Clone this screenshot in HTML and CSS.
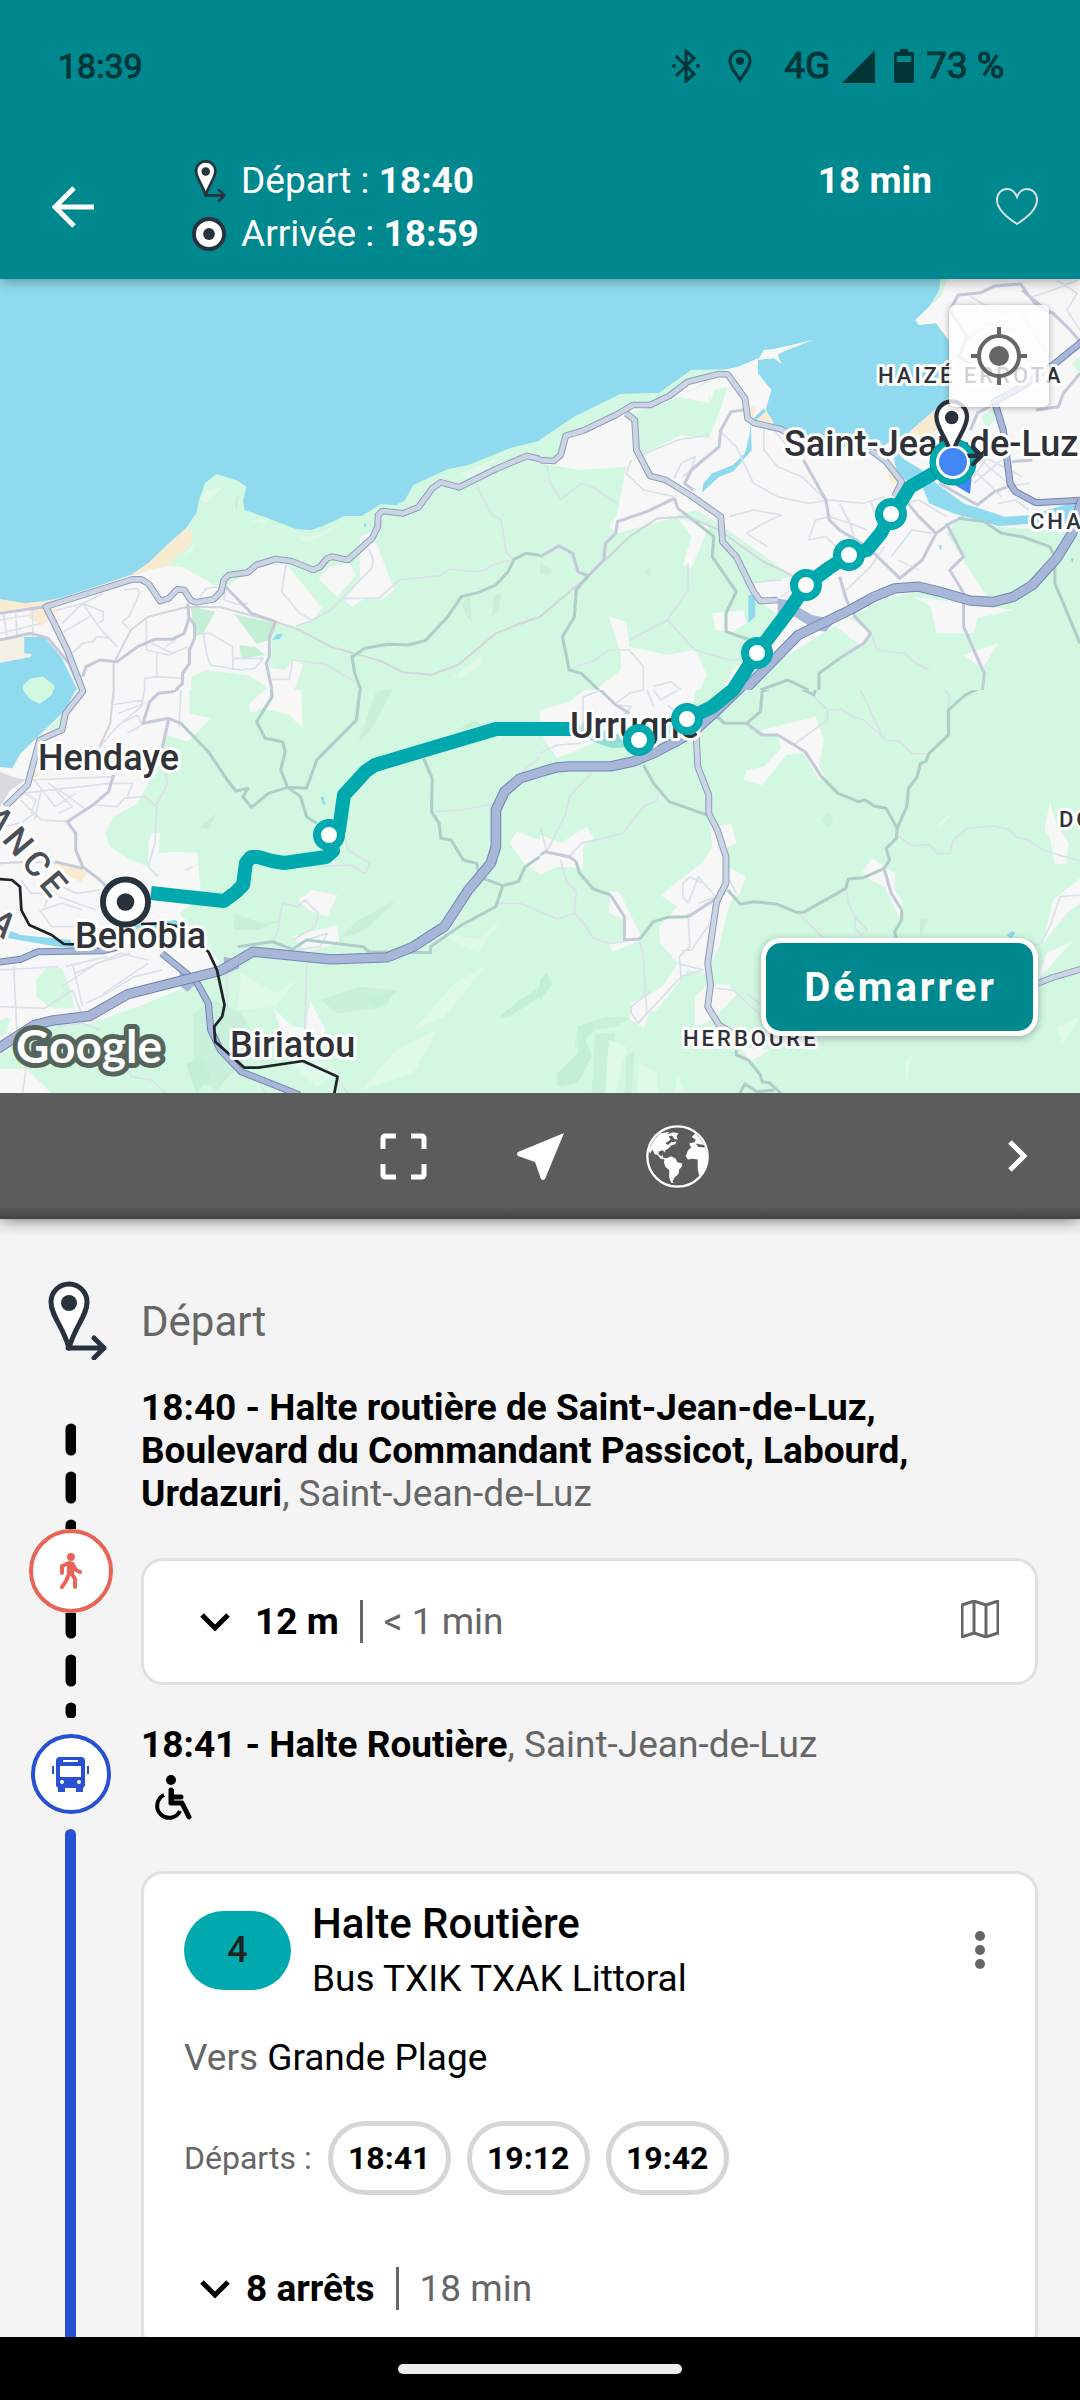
FILE: index.html
```html
<!DOCTYPE html>
<html lang="fr">
<head>
<meta charset="utf-8">
<meta name="viewport" content="width=device-width, initial-scale=1">
<title>Itinéraire</title>
<link rel="stylesheet" href="styles.css">
</head>
<body>
<svg class="defs" aria-hidden="true">
  <symbol id="pin" viewBox="0 0 60 80">
    <path d="M22 68C16 46 4 36 4 22a18 18 0 0 1 36 0C40 36 28 46 22 68Z" fill="#fff" stroke="#27323d" stroke-width="5" stroke-linejoin="round"/>
    <circle cx="22" cy="23" r="8" fill="#27323d"/>
    <path d="M21 68H57M47 58l10 10-10 10" fill="none" stroke="#27323d" stroke-width="5" stroke-linecap="round" stroke-linejoin="round"/>
  </symbol>
  <symbol id="target" viewBox="0 0 52 52">
    <circle cx="26" cy="26" r="23" fill="#fff" stroke="#27323d" stroke-width="6"/>
    <circle cx="26" cy="26" r="9" fill="#27323d"/>
  </symbol>
  <symbol id="chevron" viewBox="0 0 30 20">
    <path d="M2 3l13 13L28 3" fill="none" stroke="#000" stroke-width="5"/>
  </symbol>
</svg>

<div class="app">
  <header class="top">
    <div class="status">
      <span>18:39</span>
      <div class="status-icons">
        <svg width="28" height="34" viewBox="0 0 28 34"><path d="M4 7l18 18-8 7V2l8 7L4 27" fill="none" stroke="#003538" stroke-width="3"/><circle cx="2" cy="17" r="2" fill="#003538"/><circle cx="26" cy="17" r="2" fill="#003538"/></svg>
        <svg class="status-pin" width="24" height="34" viewBox="0 0 24 34"><path d="M12 31C8 24 2 19 2 12a10 10 0 0 1 20 0c0 7-6 12-10 19Z" fill="none" stroke="#003538" stroke-width="3"/><circle cx="12" cy="12" r="4" fill="#003538"/></svg>
        <span>4G</span>
        <svg class="status-signal" width="33" height="33" viewBox="0 0 33 33"><path d="M0 33L33 0V33Z" fill="#003538"/></svg>
        <svg class="status-battery" width="20" height="34" viewBox="0 0 20 34"><path fill-rule="evenodd" d="M6 0h8v3h4a2 2 0 0 1 2 2v27a2 2 0 0 1-2 2H2a2 2 0 0 1-2-2V5a2 2 0 0 1 2-2h4ZM3 7v6h14V7Z" fill="#003538"/></svg>
        <span>73 %</span>
      </div>
    </div>
    <div class="trip">
      <button class="icon-btn back" aria-label="Retour"><svg width="42" height="42" viewBox="0 0 42 42"><path d="M42 21H4M22 2L3 21l19 19" fill="none" stroke="#fff" stroke-width="5"/></svg></button>
      <div class="trip-times">
        <div class="trip-line"><svg class="trip-pin" width="32" height="43"><use href="#pin"/></svg><span>Départ : <b>18:40</b></span></div>
        <div class="trip-line"><svg class="trip-target" width="34" height="34"><use href="#target"/></svg><span>Arrivée : <b>18:59</b></span></div>
      </div>
      <b class="trip-duration">18 min</b>
      <button class="icon-btn" aria-label="Ajouter aux favoris"><svg width="42" height="38" viewBox="0 0 42 38"><path d="M21 36C10 29 1 21 1 12 1 5 6 1 11 1c5 0 8 3 10 8 2-5 5-8 10-8 5 0 10 4 10 11 0 9-9 17-20 24Z" fill="none" stroke="#d9dfe0" stroke-width="2"/></svg></button>
    </div>
  </header>

  <section class="map" aria-label="Carte de l'itinéraire">
    <svg class="map-canvas" viewBox="0 0 1080 814" preserveAspectRatio="xMidYMid slice">
      <!-- north-west tile -->
      <svg x="0" y="0" width="540" height="411" viewBox="0 27 1568 1233" preserveAspectRatio="none">
        <rect y="27" width="1568" height="1233" class="green"/>
        <path class="water" d="M0 27H1568V512L1480 535 1360 585 1300 598 1200 645 1175 692 1150 705 1105 703 1050 738 1000 738 945 765 905 780 860 777 770 742 710 720 706 690 716 650 690 632 628 612 595 640 578 690 570 730 540 775 490 820 430 880 380 915 300 950 200 980 130 993 70 1000 0 988Z"/>
        <path class="relief-light" d="M580 685l20-25 45-6-50 50zM730 750l50-5-10 20zM865 800l60-5 90-50-90 60-45 12zM1315 1220l90-65-5 25-60 45zM1340 610l100-45-20 30-60 30zM530 860l40-50-5 30z"/>
        <path class="relief" d="M1340 1000l25-20 5 80-20-30zM1435 975l22-10-10 60-18 15zM680 690l15-20-8 60z"/>
        <path class="land" d="M0 1020L130 1000 380 915 480 885 530 890 620 945 655 950 740 895 830 880 935 1015 905 1052 860 1068 800 1055 790 1100 775 1160 785 1195 830 1200 850 1170 880 1185 855 1260H0ZM925 925L960 890 1015 878 1033 915 980 982ZM1045 800L1080 785 1145 960 1110 990 1060 985 1020 1010 1000 990 1045 930Z"/>
        <path class="sand" d="M540 775L557 790 555 825 500 870 495 885 420 905 360 925 130 1005 170 1020 150 1045 120 1065 85 1045 85 1010 0 1025V988L70 1000 130 993 200 980 300 950 380 915 430 880Z"/>
        <path class="green" d="M555 1010L625 1025 590 1090 565 1100ZM555 1220L600 1200 720 1215 775 1250V1260H555Z"/>
        <path class="forest" d="M555 1010L625 1025 590 1090 565 1100ZM680 1032L800 1060 780 1110 745 1122ZM695 1125L740 1130 770 1155 700 1167Z"/>
        <path class="water" d="M70 1100L130 1102 180 1165 225 1260H0V1178L70 1165ZM790 1110l15-18 18 0-12 15zM1058 758h5v12h-5z"/>
        <path class="sand-light" d="M0 1105H70V1150L92 1152 88 1162 0 1175Z"/>
        <path class="green" d="M67 1260V1245L90 1225 125 1220 157 1245V1260Z"/>
        <path class="minor" d="M0 1050L90 1035M20 1100L10 1030M50 1095L45 1030M0 1090L120 1060M95 1100V1010M165 1020L240 1000 280 980M180 1060L240 1000 300 970M185 1085L260 1040M240 1000L290 1075 340 1130M240 1000L300 1025 300 1050 285 1060M360 960L400 955 405 970 375 1040 355 1055 375 1080M210 1150L240 1120 270 1115 280 1100 320 1105M425 1050V1140L490 1155 545 1130M455 1150V1220L530 1225M420 1260V1225L455 1220M590 1090L610 1090 675 1130 677 1200M590 1090L600 1150 610 1185 700 1200 740 1195 765 1165 680 1165M580 980L600 955 640 950M650 990L690 1003 720 1000M655 960L650 990M830 885L818 965 870 1030 905 1050M860 1068L905 1052 960 1020 1080 895 1083 865 1070 835M990 985H1100L1160 930 1280 917 1305 897 1380 905 1410 900 1430 885 1493 868M1380 640L1425 730 1455 750 1462 790 1470 850 1493 868M790 1228L840 1228 850 1170 945 1183 1030 1235M440 1120L500 1150M480 1130L510 1110"/>
        <path class="rail" d="M330 1260V1180L380 1080 430 1040 545 1010 640 1012 800 1055 870 1080 960 1130 1110 1175 1170 1207 1255 1214 1330 1185 1440 1090 1500 1065 1568 1040"/>
        <path class="second" d="M655 950L730 1030 800 1055 782 1105 782 1160 773 1180 790 1260M545 1000L548 1040 565 1065V1105L550 1140V1180L530 1210V1240L510 1260M240 1220L250 1190 290 1170 340 1175 400 1130 450 1108 500 1108 535 1090 550 1040M0 1030L130 1010M0 1110L90 1090 140 1105 200 1180 235 1260"/>
        <path class="second-green" d="M1048 1260L1030 1210 1022 1160 1060 1135 1125 1123 1185 1125 1235 1112 1300 1040 1340 980 1390 967 1440 945 1475 905 1493 868 1528 850 1568 856"/>
        <path class="major-case" d="M245 1275L195 1140 155 1055 133 1010 385 928 410 928 432 942 465 993 490 985 515 958 535 960 555 992 570 997 620 988 642 965 650 930 665 915 718 908 745 885 800 867 845 873 910 900 930 890 950 865 965 860 1010 870 1080 805 1097 770 1098 735 1110 723 1170 730 1215 712 1255 655 1280 637 1333 652 1440 597 1530 558 1580 570"/>
        <path class="major" d="M245 1275L195 1140 155 1055 133 1010 385 928 410 928 432 942 465 993 490 985 515 958 535 960 555 992 570 997 620 988 642 965 650 930 665 915 718 908 745 885 800 867 845 873 910 900 930 890 950 865 965 860 1010 870 1080 805 1097 770 1098 735 1110 723 1170 730 1215 712 1255 655 1280 637 1333 652 1440 597 1530 558 1580 570"/>
      </svg>

      <!-- north-east tile -->
      <svg x="540" y="0" width="540" height="411" viewBox="0 27 1568 1233" preserveAspectRatio="none">
        <rect y="27" width="1568" height="1233" class="land"/>
        <path class="water" d="M0 27H1182L1165 75 1090 150 1100 165 1150 160 1190 215V380L1068 490 1000 525 960 540 800 520 711 485 675 460 655 420 672 360 633 310 633 265 575 290 530 300 440 300 345 370 235 372 100 440 0 510Z"/>
        <path class="green" d="M1182 27L1165 75 1130 110 1160 60 1162 27ZM0 510L100 440 235 372 345 370 440 300 540 298 520 315 430 340 375 385 320 410 270 410 220 440 75 500 50 575 0 575ZM400 380L490 330 495 400 505 360 545 350 520 430 490 505 410 495 295 555 270 480 265 425 340 410ZM0 580L120 600 250 590 222 745 380 740 455 720 560 790 735 920 600 945 640 1000 700 1040 660 1110 560 1200 530 1260H0ZM1215 745L1320 770 1480 780 1568 790V1260H600L680 1180 830 1085 1000 985 1100 965 1300 985 1180 790ZM1280 440L1320 415 1320 450 1300 475ZM1545 280L1568 260V310Z"/>
        <path class="relief" d="M0 880l35 20-10 20-25-10zM305 910l18-22-4 30z"/>
        <path class="land" d="M500 1030L590 1020 600 1060 560 1085 510 1080ZM415 885L440 800 400 745 450 760 490 770 440 893ZM200 1040L250 1055 260 1130 370 1155 450 1140 485 1215 465 1260H160L235 1200V1150ZM1085 980L1375 1020 1270 1045 1260 1090 1150 1090 1135 1010ZM860 1070L900 1045 965 1090 935 1130ZM1230 1155L1330 1120 1285 1195ZM400 380L495 335 490 400ZM200 770L222 740 380 660 400 740 225 790Z"/>
        <path class="land" d="M633 270L650 240 680 237 795 209 705 245 690 255 702 283 680 265Z"/>
        <path class="sand" d="M655 418L680 460 625 450ZM1190 380L1068 492 1130 500 1190 440ZM1010 600L1040 590 1035 640 1015 640ZM590 415L625 410 620 450 595 450Z"/>
        <path class="water" d="M1020 530L1060 570 1110 600 1150 640 1230 700 1350 740 1430 735 1568 690V760H1450L1330 768 1200 730 1130 700 1110 650 1040 620ZM612 462L615 540 560 605 520 620 470 668 475 640 500 610 560 585 595 550 607 500ZM605 975L625 975V1040L605 1058ZM620 445l30-30 5 10-30 28zM1157 825l10 2-4 14zM1540 865l10 0-4 14z"/>
        <path class="minor" d="M20 585L30 640 60 688 120 640 160 655 225 700M295 555L400 510 490 495M265 570L250 610 300 660 390 680M390 625L410 580 450 560 440 600 415 620M520 480L570 530 620 640 690 680 780 700 840 690M550 740L620 720 700 735 650 760 600 790 660 830M650 480V540L690 590 760 620 830 690M680 480L720 530 770 560M780 810L800 750 840 740M780 810L830 800 870 840M840 690L940 700 1000 680M840 740L900 760 950 780M870 700L900 760 920 830M960 690L980 760 1040 720M1020 860L1080 780 1140 790M1040 870L1100 900M1050 700L1100 690 1180 740M1240 600L1290 560 1400 620M1260 640L1340 570M1280 570L1370 650M1260 600L1340 680M1300 560L1260 620M1330 700L1380 690 1420 720M1250 80L1300 110 1360 130M1400 130L1440 200 1480 260M1430 80L1490 60 1568 27M1500 30L1560 70 1530 120 1568 180M1230 220L1300 160 1380 180M1240 300L1330 180M1220 260L1380 340M590 940L700 930M430 880V960L370 1050 260 1110M370 1050L450 1140 550 1170 620 1168M80 1200L160 1170 200 1140 260 1140 300 1190V1260M960 1090L980 1140 1060 1150 1090 1180 1130 1200M330 1250L380 1235 410 1260M890 960L960 890 1000 830M700 980L880 860M1420 640L1350 650"/>
        <path class="rail" d="M0 1040L140 918 260 800 340 745 430 740 520 780 640 870 740 920"/>
        <path class="second" d="M0 860L55 828 95 850 110 905 140 918 185 870 190 820 220 790 225 755 310 725 390 685M590 420L555 425 525 480 520 530 440 600 420 640 445 660M390 685L400 715 450 755M765 570L830 690 840 750 870 780 950 830 1045 925 1110 870 1150 790 1190 760 1230 740M870 920L890 990 915 1040 960 1090 940 1120 870 1165M1060 690L1100 740 1150 790M1180 760L1230 860 1190 900 1230 970 1230 1070 1290 1210 1285 1260M1190 120L1215 75 1280 68 1320 48 1395 42 1440 105 1490 130 1540 180 1568 215M1190 120L1240 200 1215 260 1300 310M1568 310L1520 370 1505 410 1440 420M1160 640L1270 705 1320 665 1360 650M1370 575L1430 570M1250 480L1270 430 1320 400M1480 130L1400 60"/>
        <path class="second-green" d="M450 755L505 800 500 860 570 965 540 1030 540 1085 610 1110M140 918L105 960 100 1040 65 1100 85 1200 120 1210 170 1260M1215 745L1290 755 1340 790 1400 800 1480 830 1495 860V940L1568 1120M870 1165L810 1210V1260M640 1260L720 1230 780 1260"/>
        <path class="major-case" d="M-10 570L40 573 60 555 75 497 125 482 220 435 270 405 320 405 375 378 430 335 520 312 545 313 595 385 603 445 620 458 700 478 720 490M250 430L275 450 280 540 320 618 365 630 440 678 525 740 530 815 570 860 620 965 640 993 690 990M960 540L1005 575 1050 635 1030 680"/>
        <path class="major" d="M-10 570L40 573 60 555 75 497 125 482 220 435 270 405 320 405 375 378 430 335 520 312 545 313 595 385 603 445 620 458 700 478 720 490M250 430L275 450 280 540 320 618 365 630 440 678 525 740 530 815 570 860 620 965 640 993 690 990M960 540L1005 575 1050 635 1030 680"/>
        <path class="junction" d="M690 985L715 990 790 1035 860 1050 830 1085 800 1080 740 1040 690 1030Z"/>
        <path class="trunk-case" d="M1580 210L1490 285 1400 350 1320 395 1345 480 1365 640 1380 665 1440 698 1580 690"/>
        <path class="trunk" d="M1580 210L1490 285 1400 350 1320 395 1345 480 1365 640 1380 665 1440 698 1580 690"/>
        <path class="highway-case" d="M570 1285L750 1095 900 1020 970 980 1030 955 1100 950 1160 965 1250 992 1315 996 1375 980 1430 945 1500 865 1545 790 1575 690"/>
        <path class="highway" d="M570 1285L750 1095 900 1020 970 980 1030 955 1100 950 1160 965 1250 992 1315 996 1375 980 1430 945 1500 865 1545 790 1575 690"/>
      </svg>

      <!-- south-west tile -->
      <svg x="0" y="411" width="540" height="403" viewBox="0 30 1568 1209" preserveAspectRatio="none">
        <rect y="30" width="1568" height="1209" class="land"/>
        <path class="green" d="M550 30V100L612 115 545 185 485 165 470 230 400 370 330 410 305 460 320 500 380 540 430 560 430 490 440 460 465 460 460 520 500 515 572 518 585 650 520 700 600 790 640 850 560 900 520 930 400 980 250 1035 150 1020 60 1070 0 1130V1165L80 1170 150 1240H1568V30ZM105 900L135 865 180 865 205 930 215 985 150 985 105 950ZM190 90L210 60 180 150 140 150ZM0 1020L30 1010 20 1060 0 1070Z"/>
        <path class="relief" d="M580 440l50-40-25 50zM1040 190l50-150 60-30-60 120zM980 780l60-60 110-60-90 90zM930 960l110-40 110 10-30 50-140 20zM560 1000l60-40 80 40 50 90-120 140-70-30zM680 700l80 30 60-10-70 30-70 0z"/>
        <path class="relief-light" d="M700 880l100 60 60-40-60 80-110 10zM1200 1050l120-140 90-50-120 150zM1250 750l140 30 60-60-60 100zM1050 1230l100-120 120-60-70 130zM840 1150l60-90 80 120-60 40z"/>
        <path class="forest" d="M1450 1010l60-50 58-40v30l-90 60zM1060 950l100-20-60 50zM540 1150l50-20 20 60-40 50zM1330 150l50-30 20 15z"/>
        <path class="land" d="M725 70L800 0 875 30 878 145 840 105 760 85 727 100ZM865 660L905 630 980 645 950 710 895 690ZM850 770L980 735 985 790 890 815ZM795 985L850 1040 890 1045 900 960 945 1050 930 1120 830 1100ZM1480 490L1500 455 1568 480V580L1530 560Z"/>
        <path class="water" d="M0 30L220 30 190 90 110 170 60 220 35 265 0 260ZM10 745L60 765 205 780 215 805 170 800 25 775ZM932 350l8 0 4 25-8-4zM390 735l120-15 80 70-20 0-60-50-120 10z"/>
        <path class="green" d="M66 30L85 55 115 72 150 45 155 30Z"/>
        <path class="urban" d="M0 275L35 290 75 300 30 330 0 380Z"/>
        <path class="sand" d="M165 550L215 560 255 575 235 605 200 590ZM85 270L120 280 100 295Z"/>
        <path class="minor" d="M330 30L330 60M325 75L415 60M345 100L420 70M350 130L400 105 410 130M370 160L420 130M85 300L330 290 320 310M60 340L320 310 385 310 370 350M100 300L160 380 220 340M60 360L120 420 200 425M160 330L210 380 170 400M140 310L200 350 250 390M90 400L105 360 70 340M0 440L60 430 100 400M120 330L100 420M275 375L340 380 360 355 420 350 455 380 450 490 430 560 460 590M470 230L487 310 455 375M0 550L80 545 165 550M115 690L150 740 230 740M120 690L180 670 240 690M60 600L90 640 170 640M160 610L220 640 290 630M170 650L280 690M150 620L130 680M250 970L310 940 390 890 470 870M180 920L280 850 380 820M220 880L350 820 430 840M300 940L430 850M40 860L50 1080 75 1170 65 1240M0 980L130 985 210 930 240 1010M210 850L240 980M0 870L170 860M190 860L310 830M420 30L410 80 340 140 290 200M525 30L520 140M540 570L560 560M920 560L1020 555 1060 580 1075 550 1010 510 1000 470M790 785L805 760 820 670 865 680 885 660 925 700 915 740 850 780M890 780L950 760 930 800 860 810M890 850L885 1050M1260 395L1340 390 1440 370M1470 360L1500 290 1568 230M1440 670L1510 670 1568 695M660 880L660 990 700 1060M360 1130L380 1190 440 1200 480 1240M740 1180L770 1240M880 1150L970 1180 1010 1240M170 1040L240 1030 290 1050"/>
        <path class="rail" d="M330 30L320 130 280 220M0 550L90 545"/>
        <path class="second" d="M530 20L500 35 460 40 435 65 415 130 490 115 525 130M490 115L470 210M330 285L315 335 270 375 195 425 220 460V510L240 560 290 600 320 630M160 545L240 565"/>
        <path class="second-green" d="M525 130L605 215 660 300 685 333 720 325 705 350 730 382 780 340 835 322M785 0L790 50 745 125 770 175 820 185 828 215 815 270 835 322 873 350 890 410 920 430M1035 0L1045 30 1035 120 920 240 890 325 835 322M1230 235L1255 295 1253 395 1275 430 1280 475 1310 480 1345 540 1385 550 1390 590 1460 617 1505 605 1525 560 1568 530M1460 617L1440 680 1340 735 1250 800V818L1070 815 1055 800 890 780 850 808 790 785 690 800"/>
        <path class="major-case" d="M232 0L240 35 190 100 180 150 115 180 80 315 15 380"/>
        <path class="major" d="M232 0L240 35 190 100 180 150 115 180 80 315 15 380"/>
        <path class="junction" d="M520 870L545 880 570 910 545 935 525 920ZM650 830L690 840 695 865 650 885Z"/>
        <path class="trunk-case" d="M-10 847L60 838 110 815 300 812 350 800M470 820L570 905 605 970 612 1050 640 1110 700 1175 870 1245"/>
        <path class="trunk" d="M-10 847L60 838 110 815 300 812 350 800M470 820L570 905 605 970 612 1050 640 1110 700 1175 870 1245"/>
        <path class="highway-case" d="M-20 1115L100 1035 150 1022 260 1008 370 943 640 872 735 815 960 838 1125 832 1200 800 1290 740 1360 630 1425 550 1440 500 1440 390 1465 335 1510 295 1590 270"/>
        <path class="highway" d="M-20 1115L100 1035 150 1022 260 1008 370 943 640 872 735 815 960 838 1125 832 1200 800 1290 740 1360 630 1425 550 1440 500 1440 390 1465 335 1510 295 1590 270"/>
        <path class="border" d="M-5 597L35 600 58 620 62 690 85 735 150 765 185 792 215 793M410 732L470 730 520 740 605 815 630 870 652 975 645 1010 622 1040 625 1085 710 1163 750 1163 880 1143 980 1190 970 1245"/>
      </svg>

      <!-- south-east tile -->
      <svg x="540" y="411" width="540" height="403" viewBox="0 30 1568 1209" preserveAspectRatio="none">
        <rect y="30" width="1568" height="1209" class="green"/>
        <path class="relief" d="M820 420l15-25 18 30-20 20zM1105 715l22 0-25 60zM0 900l20-20 15 30-35 50zM110 1040l80-30 80 0-50 30-60 10-60 60zM160 1060l60 0-30 180-40 0zM250 1130l25-20-10 130-20 0z"/>
        <path class="forest" d="M110 1040l60-20-40 50 20 60-40 80-60 10 0-40 60-60zM0 900l20-20 15 30-35 50z"/>
        <path class="relief-light" d="M1155 430l40-30-30 40zM200 1080l50 20-30 140-30 0zM290 1150l50 30 0 60-60 0zM400 1180l20 60-30 0zM1060 1150l20-30-15 90zM1500 1040l68-30-50 80z"/>
        <path class="land" d="M0 90L85 65 170 0H460L440 90 200 170 50 235 0 160ZM645 150L800 110 825 180 810 260 830 290 810 300 765 220 715 225 645 315 590 300 600 270 650 260 700 205 690 165 650 160ZM0 465L60 490 135 440 158 475 125 500V565L50 560 0 585ZM495 440L555 432 570 490 545 500 545 560 598 590 580 640 550 670 520 800 480 880 430 870 340 990 260 1020 265 980 355 920 400 850 350 790 345 740 400 680 350 645 470 550 500 500ZM205 633L230 635 290 760 295 780 210 815 200 790 240 780 240 715 200 700ZM935 575L965 535 1030 580 1030 630 1055 665 1045 715 1000 620 960 600ZM1480 370L1500 430 1535 490 1528 550 1495 553 1480 470 1465 450ZM1568 595L1490 660 1460 790 1530 700 1568 670ZM1545 785L1470 820 1445 900ZM450 950L490 910 550 915 570 945 500 1020 450 1040ZM580 1100L665 1110 610 1145ZM265 970L345 930 300 1045 265 1020Z"/>
        <path class="water" d="M1355 765l15-12 10 5-12 18z"/>
        <path class="minor" d="M0 220L50 195 120 190M125 130V50L180 30M220 70L260 40 300 30M300 0L330 80M330 30L350 60 400 30M230 75L265 80 240 110M370 75L410 110M150 280L85 350 75 400 20 515M345 340L340 360 300 380 240 460 120 490 80 535M60 540L75 600 105 635 100 700 50 717 0 695M100 700L135 740 155 775 200 790 245 785M290 785L300 830 310 1000 285 1030 265 1000 265 980 320 935M430 700L435 800 405 830 410 900M490 735L440 810 410 812M400 850L475 870M470 610L435 590 415 610 415 650 430 670 460 590 510 650 460 670M550 600L570 640M840 90L875 88 910 110 940 120 1005 180 1045 185 1080 220 1130 222M915 0L945 60 990 160M795 50L835 90V120L735 195M1150 0L1188 45 1186 90M1035 465L1080 497 1130 493 1155 522 1190 520 1200 480 1240 445 1320 438 1365 450 1385 472 1420 482 1460 510 1540 535 1568 542M890 630L895 670 915 710 950 750 935 765 915 745V710M750 700L825 775M510 925L560 930 645 1010M650 980L600 940M285 1030L410 890 475 870M1568 645L1510 650 1480 740 1455 790 1430 800M0 440L20 515"/>
        <path class="second" d="M125 0L165 20 220 75 260 100M600 130L645 165 690 165 770 215 815 287M0 525L15 515 85 530 105 545M205 645L245 710V780L290 777M1000 570L1020 640 1050 690M430 710L520 650"/>
        <path class="second-green" d="M300 255L330 310 375 365 485 405M505 100L535 130 600 130 640 95 645 35 720 5 795 45 810 0M815 287L865 340 925 365 945 360 970 378 1005 385 1037 445M1285 20L1235 45 1186 90V165L1130 220 1120 245 1105 250 1095 290 1070 325 1065 380 1037 445 1035 475 1005 505 1015 540 1000 565 940 593 895 597 888 625 765 697 745 697 690 673 620 665 582 673 545 630M105 545L115 580 155 627 205 645M290 777L330 725 370 712 430 710M1050 690V720L1030 755 1035 780M570 1110V1125L605 1140 640 1185 645 1205 665 1208 700 1240M580 1240L595 1212 630 1235 680 1230"/>
        <path class="major-case" d="M452 130L458 260 490 345V400L515 450 540 530V610L513 665 487 850 495 915 487 980 520 1035 560 1060M1440 912L1490 892 1580 865"/>
        <path class="major" d="M452 130L458 260 490 345V400L515 450 540 530V610L513 665 487 850 495 915 487 980 520 1035 560 1060M1440 912L1490 892 1580 865"/>
        <path class="highway-case" d="M-20 282L50 262 85 259H205L270 245 330 220 440 160 500 105 620 -15"/>
        <path class="highway" d="M-20 282L50 262 85 259H205L270 245 330 220 440 160 500 105 620 -15"/>
      </svg>

      <path class="route" d="M953 183L910 208 900 224 891 235 881 254 867 271 849 276 829 289 806 306 788 333 757 374 733 411 712 428 687 440"/>
      <path class="route route-faint" d="M687 440L639 461 612 462 580 450"/>
      <path class="route" d="M580 450H496L375 486 366 492 344 516 339 551 329 556 333 572 326 578 284 584 272 582 258 578H251L246 584 243 606 236 613 224 622 151 614"/>

      <g class="place">
        <text x="784" y="177">Saint-Jean-de-Luz</text>
        <text x="570" y="459">Urrugne</text>
        <text x="38" y="491">Hendaye</text>
        <text x="75" y="669">Behobia</text>
        <text x="230" y="778">Biriatou</text>
      </g>
      <g class="district">
        <text x="878" y="104">HAIZÉ ERROTA</text>
        <text x="1030" y="250">CHA</text>
        <text x="1059" y="548">DO</text>
        <text x="683" y="767">HERBOURE</text>
      </g>
      <g class="country">
        <text transform="translate(54 624) rotate(50)" text-anchor="end">ANCE</text>
        <text transform="translate(-14 646) rotate(40)">A</text>
      </g>

      <g class="stop">
        <circle cx="329" cy="556" r="12"/><circle cx="639" cy="461" r="12"/><circle cx="687" cy="440" r="12"/>
        <circle cx="757" cy="374" r="12"/><circle cx="806" cy="306" r="12"/><circle cx="849" cy="276" r="12"/>
        <circle cx="891" cy="235" r="12"/>
      </g>
      <use href="#target" x="100" y="597" width="51" height="52"/>
      <path d="M972 194L953 205 970 215Z" fill="#4285f4"/>
      <circle cx="953" cy="183" r="22" fill="#fff" stroke="#008b90" stroke-width="3"/>
      <circle cx="953" cy="183" r="20" fill="none" stroke="#00a9ae" stroke-width="6"/>
      <use href="#pin" x="933" y="118" width="51" height="70"/>
      <circle cx="953" cy="183" r="15" fill="#4285f4" stroke="#fff" stroke-width="2"/>
      <text class="google" x="16" y="784">Google</text>
    </svg>
    <button class="locate" aria-label="Ma position"><svg width="56" height="58" viewBox="0 0 56 58"><circle cx="28" cy="29" r="20" fill="none" stroke="#666" stroke-width="4"/><circle cx="28" cy="29" r="10" fill="#666"/><path d="M28 0V9M28 49V58M0 29H8M48 29H56" stroke="#666" stroke-width="4"/></svg></button>
    <button class="start">Démarrer</button>
  </section>

  <nav class="tools" aria-label="Outils de carte">
    <div class="tools-main">
      <button class="icon-btn" aria-label="Plein écran"><svg width="47" height="47" viewBox="0 0 47 47"><path d="M3 16V5a2 2 0 0 1 2-2H16M31 3H42a2 2 0 0 1 2 2V16M44 31V42a2 2 0 0 1-2 2H31M16 44H5a2 2 0 0 1-2-2V31" fill="none" stroke="#fff" stroke-width="5"/></svg></button>
      <button class="icon-btn" aria-label="Navigation"><svg width="47" height="47" viewBox="0 0 47 47"><path d="M47 0L28 46Q26 48 24 46L18 29 1 23Q-1 21 1 19Z" fill="#fff"/></svg></button>
      <button class="icon-btn" aria-label="Type de carte"><svg width="63" height="63" viewBox="0 0 190 190"><circle cx="95" cy="95" r="91" fill="none" stroke="#fff" stroke-width="7"/><path fill="#fff" d="M8 75L24 45 42 26 70 20 65 28 82 22 98 26 92 34 96 44 86 42 78 32 68 34 74 44 66 50 58 54 66 60 76 52 92 50 88 58 76 62 66 72 58 76V84L50 76 38 80V88L46 94 52 90 50 98 62 100 76 94 90 102 94 112 110 116 108 126 100 134 98 148 86 158 80 170 84 176 76 174 70 158V136L58 126 54 112 56 104 44 102 34 90 26 88 20 74 12 86ZM136 68L130 56 146 52 150 44 138 36 148 26 162 40 176 60 160 58 150 56 158 66 178 68 186 92 184 118 170 144 160 152 156 132 156 104 140 102 126 104 120 94 126 78Z"/></svg></button>
    </div>
    <button class="icon-btn tools-next" aria-label="Suivant"><svg width="20" height="32" viewBox="0 0 20 32"><path d="M2 2l14 14L2 30" fill="none" stroke="#fff" stroke-width="5"/></svg></button>
  </nav>

  <main class="itinerary">
    <div class="step step-head">
      <div class="rail-col"><svg class="step-pin" width="62" height="80"><use href="#pin"/></svg></div>
      <h1>Départ</h1>
    </div>

    <div class="step step-walk">
      <div class="rail-col rail-walk">
        <svg class="dashes dashes-before" width="11"><line x1="6" y1="6" x2="6" y2="400"/></svg>
        <span class="mode mode-walk"><svg width="22" height="36" viewBox="0 0 22 36"><circle cx="11" cy="4" r="4" fill="#e96458"/><path d="M9 10L2 13V20M10 10V21M13 12L16 17 20 19M9 21L6 28 2 34M12 21L15 26V34" fill="none" stroke="#e96458" stroke-width="4" stroke-linecap="round" stroke-linejoin="round"/><path d="M7 9h7v13H7z" fill="#e96458"/></svg></span>
        <svg class="dashes dashes-after" width="11"><line x1="6" y1="0" x2="6" y2="100"/></svg>
      </div>
      <div class="step-body">
        <p class="place-line"><b>18:40 - Halte routière de Saint-Jean-de-Luz, Boulevard du Commandant Passicot, Labourd, Urdazuri</b>, Saint-Jean-de-Luz</p>
        <article class="card card-walk">
          <button class="summary summary-walk"><svg width="30" height="20"><use href="#chevron"/></svg><b>12 m</b><span class="sep"></span><span>&lt; 1 min</span></button>
          <button class="icon-btn" aria-label="Voir sur la carte"><svg width="38" height="38" viewBox="0 0 38 38"><path d="M1 5L13 1 25 5 37 1V33L25 37 13 33 1 37ZM13 1V33M25 5V37" fill="none" stroke="#666" stroke-width="3" stroke-linejoin="round"/></svg></button>
        </article>
      </div>
    </div>

    <div class="step step-bus">
      <div class="rail-col rail-bus">
        <span class="mode mode-bus"><svg width="37" height="35" viewBox="0 0 37 35"><path fill="#2850d2" d="M8 0H29a4 4 0 0 1 4 4V29l-2 2v4H24V31H13v4H6V31l-2-2V4a4 4 0 0 1 4-4ZM0 9H2V17H0ZM35 9H37V17H35Z"/><path fill="#fff" d="M11 3H26V5H11ZM8 9H29V20H8Z"/><circle cx="10" cy="25" r="2" fill="#fff"/><circle cx="27" cy="25" r="2" fill="#fff"/></svg></span>
        <span class="line"></span>
      </div>
      <div class="step-body">
        <p class="place-line"><b>18:41 - Halte Routière</b>, Saint-Jean-de-Luz</p>
        <svg class="access" width="38" height="46" viewBox="0 0 38 46" role="img" aria-label="Accessible en fauteuil roulant"><circle cx="17" cy="5" r="5"/><path d="M17 15V28H28L35 42M17 22H27" fill="none" stroke="#000" stroke-width="5" stroke-linecap="round" stroke-linejoin="round"/><path d="M16 14h4v15h-4z"/><path d="M10 20A12 12 0 1 0 26 36" fill="none" stroke="#000" stroke-width="4"/></svg>
        <article class="card card-bus">
          <header class="bus-head">
            <span class="badge">4</span>
            <div class="bus-name"><h2>Halte Routière</h2><p>Bus TXIK TXAK Littoral</p></div>
            <button class="icon-btn" aria-label="Plus d'options"><svg width="12" height="40" viewBox="0 0 12 40" fill="#666"><circle cx="6" cy="6" r="5"/><circle cx="6" cy="20" r="5"/><circle cx="6" cy="34" r="5"/></svg></button>
          </header>
          <p class="toward">Vers <span>Grande Plage</span></p>
          <div class="departures"><span>Départs :</span><button>18:41</button><button>19:12</button><button>19:42</button></div>
          <button class="summary summary-bus"><svg width="30" height="20"><use href="#chevron"/></svg><b>8 arrêts</b><span class="sep"></span><span>18 min</span></button>
        </article>
      </div>
    </div>
  </main>

  <footer class="system-nav"><span></span></footer>
</div>
</body>
</html>
```
FILE: styles.css
```css
* { box-sizing: border-box; }
body { margin: 0; font-family: Roboto, "Liberation Sans", sans-serif; color: #000; background: #f4f4f4; }
button { margin: 0; padding: 0; border: 0; background: none; font: inherit; color: inherit; cursor: pointer; }
h1, h2, p { margin: 0; font-weight: 400; }
svg { display: block; flex: none; }
.defs { position: absolute; width: 0; height: 0; }
.app { display: flex; flex-direction: column; height: 100vh; overflow: hidden; }
.icon-btn { display: flex; align-items: center; justify-content: center; flex: none; }

.top { flex: none; background: #00888f; box-shadow: 0 2px 12px rgba(0, 0, 0, .35); position: relative; z-index: 1; }
.status { display: flex; justify-content: space-between; align-items: center; padding: 44px 76px 0 58px; font-size: 34px; line-height: 44px; color: #003538; -webkit-text-stroke: 1px #003538; }
.status-icons { display: flex; align-items: center; font-size: 37px; }
.status-pin { margin: 0 32px 0 28px; }
.status-signal { margin: 0 19px 0 12px; }
.status-battery { margin-right: 12px; }
.trip { display: flex; align-items: center; padding: 66px 42px 19px 52px; color: #fff; font-size: 37px; line-height: 53px; }
.trip-times { flex: 1; margin-left: 98px; }
.trip-line { display: flex; align-items: center; }
.trip-line svg { margin-right: 15px; }
.trip-line .trip-pin { margin-left: 2px; }
.trip-duration { align-self: flex-start; margin-right: 64px; }

.map { position: relative; flex: none; aspect-ratio: 1080 / 814; overflow: hidden; background: #8fdaee; }
.map-canvas { width: 100%; height: 100%; }
.land { fill: #f7f7f7; }
.green { fill: #d3f8e2; }
.forest { fill: #c3efd5; }
.relief { fill: #c9f0da; }
.relief-light { fill: #dffae9; }
.water { fill: #8fdaee; }
.sand { fill: #f8ebd0; }
.sand-light { fill: #f4f0e6; }
.urban { fill: #d8dadd; }
.minor, .rail, .second, .second-green, .major, .major-case, .trunk, .trunk-case, .highway, .highway-case, .border, .route { fill: none; stroke-linejoin: round; }
.minor { stroke: #dbe1ea; stroke-width: 5; }
.rail { stroke: #d6d5de; stroke-width: 6; }
.second { stroke: #c4cad9; stroke-width: 9; }
.second-green { stroke: #b0cdca; stroke-width: 9; }
.major-case { stroke: #8e9dbd; stroke-width: 20; }
.major { stroke: #ccd5e3; stroke-width: 14; }
.trunk-case { stroke: #7285b8; stroke-width: 21; }
.trunk { stroke: #a8b7d8; stroke-width: 15; }
.highway-case { stroke: #7285b8; stroke-width: 31; }
.highway { stroke: #a8b7d8; stroke-width: 25; }
.junction { fill: #a8b7d8; }
.border { stroke: #202427; stroke-width: 8; }
.route { stroke: #00a9ae; stroke-width: 14; }
.route-faint { opacity: .3; }
.stop circle { fill: #fff; stroke: #00a9ae; stroke-width: 8; }
.place, .district, .country { fill: #303238; stroke: #fff; stroke-width: 6; stroke-linejoin: round; paint-order: stroke; font-weight: 500; }
.place { font-size: 36px; }
.district { font-size: 22px; letter-spacing: 3px; }
.country { font-size: 35px; letter-spacing: 5px; fill: #4c4f56; }
.google { font-family: Lato, sans-serif; font-weight: 700; font-size: 46px; fill: #fff; stroke: #56655c; stroke-width: 10; stroke-linejoin: round; paint-order: stroke; }
.locate { position: absolute; top: 26px; right: 31px; width: 100px; height: 102px; display: flex; align-items: center; justify-content: center; background: rgba(255, 255, 255, .78); border-radius: 6px; box-shadow: 0 1px 6px rgba(0, 0, 0, .3); }
.start { position: absolute; right: 42px; bottom: 57px; padding: 20px 36px 18px 38px; border: 5px solid #fff; border-radius: 20px; background: #00888f; color: #fff; font-size: 40px; line-height: 50px; font-weight: 700; letter-spacing: 3px; box-shadow: 0 2px 8px rgba(0, 0, 0, .3); }

.tools { position: relative; z-index: 1; flex: none; display: flex; align-items: center; height: 126px; padding: 0 52px 0 0; background: linear-gradient(#5c5c5c 90%, #434343); box-shadow: 0 0 16px rgba(0, 0, 0, .6); clip-path: inset(0 0 -16px 0); }
.tools-main { flex: 1; display: flex; justify-content: center; align-items: center; gap: 86px; padding-left: 73px; }
.tools-main .icon-btn { width: 51px; }

.itinerary { flex: 1; min-height: 0; overflow: hidden; padding-top: 61px; color: #666; font-size: 37px; line-height: 43px; }
.itinerary b { color: #000; }
.step { display: grid; grid-template-columns: 141px 1fr; padding-right: 42px; }
.step-head { align-items: center; }
.step-head h1 { padding-top: 4px; font-size: 42px; line-height: 50px; }
.step-pin { margin-left: 46px; }
.rail-walk, .rail-bus { display: flex; flex-direction: column; align-items: center; }
.rail-walk { padding: 63px 0 0; }
.dashes { stroke: #000; stroke-width: 11; stroke-linecap: round; stroke-dasharray: 21 27; }
.dashes-before { height: 106px; }
.dashes-after { flex: 1 1 0px; min-height: 0; stroke-dashoffset: 1; }
.step-walk .step-body { padding: 26px 0 33px; }
.mode { display: flex; align-items: center; justify-content: center; flex: none; border-radius: 50%; background: #fff; }
.mode-walk { width: 84px; height: 84px; border: 4px solid #e96458; }
.mode-bus { width: 80px; height: 80px; border: 4px solid #2850d2; }
.rail-bus { padding-top: 16px; gap: 15px; }
.line { flex: 1; width: 11px; border-radius: 6px 6px 0 0; background: #2850d2; }
.step-bus .step-body { padding-top: 5px; }
.card { border: 3px solid #e0e0e0; border-radius: 22px; background: #fff; }
.card-walk { display: flex; align-items: flex-start; justify-content: space-between; margin-top: 43px; padding: 39px 36px 39px 56px; }
.summary { display: flex; align-items: center; height: 43px; }
.summary .sep { width: 3px; height: 43px; margin: 0 21px; background: #666; }
.summary-walk b { margin-left: 25px; }
.summary-bus b { margin-left: 16px; }
.access { margin: 9px 0 0 13px; }
.card-bus { margin-top: 50px; padding: 25px 49px 40px 40px; }
.bus-head { display: flex; align-items: center; gap: 21px; }
.badge { width: 107px; height: 79px; border-radius: 40px; background: #00a9ae; color: #222; font-size: 36px; font-weight: 500; line-height: 79px; text-align: center; }
.bus-name { flex: 1; color: #000; }
.bus-name h2 { font-size: 42px; line-height: 50px; font-weight: 500; }
.bus-name p { margin-top: 8px; line-height: 44px; }
.toward { margin-top: 35px; line-height: 44px; }
.toward span { color: #000; }
.departures { display: flex; align-items: center; gap: 16px; margin-top: 41px; font-size: 32px; }
.departures button { width: 123px; height: 74px; border: 5px solid #d6d6d6; border-radius: 37px; color: #000; font-weight: 700; }
.summary-bus { margin: 72px 0 0 16px; }

.system-nav { position: relative; flex: none; display: flex; align-items: center; justify-content: center; height: 63px; background: #000; }
.system-nav span { width: 284px; height: 10px; border-radius: 5px; background: #ececec; }
```
